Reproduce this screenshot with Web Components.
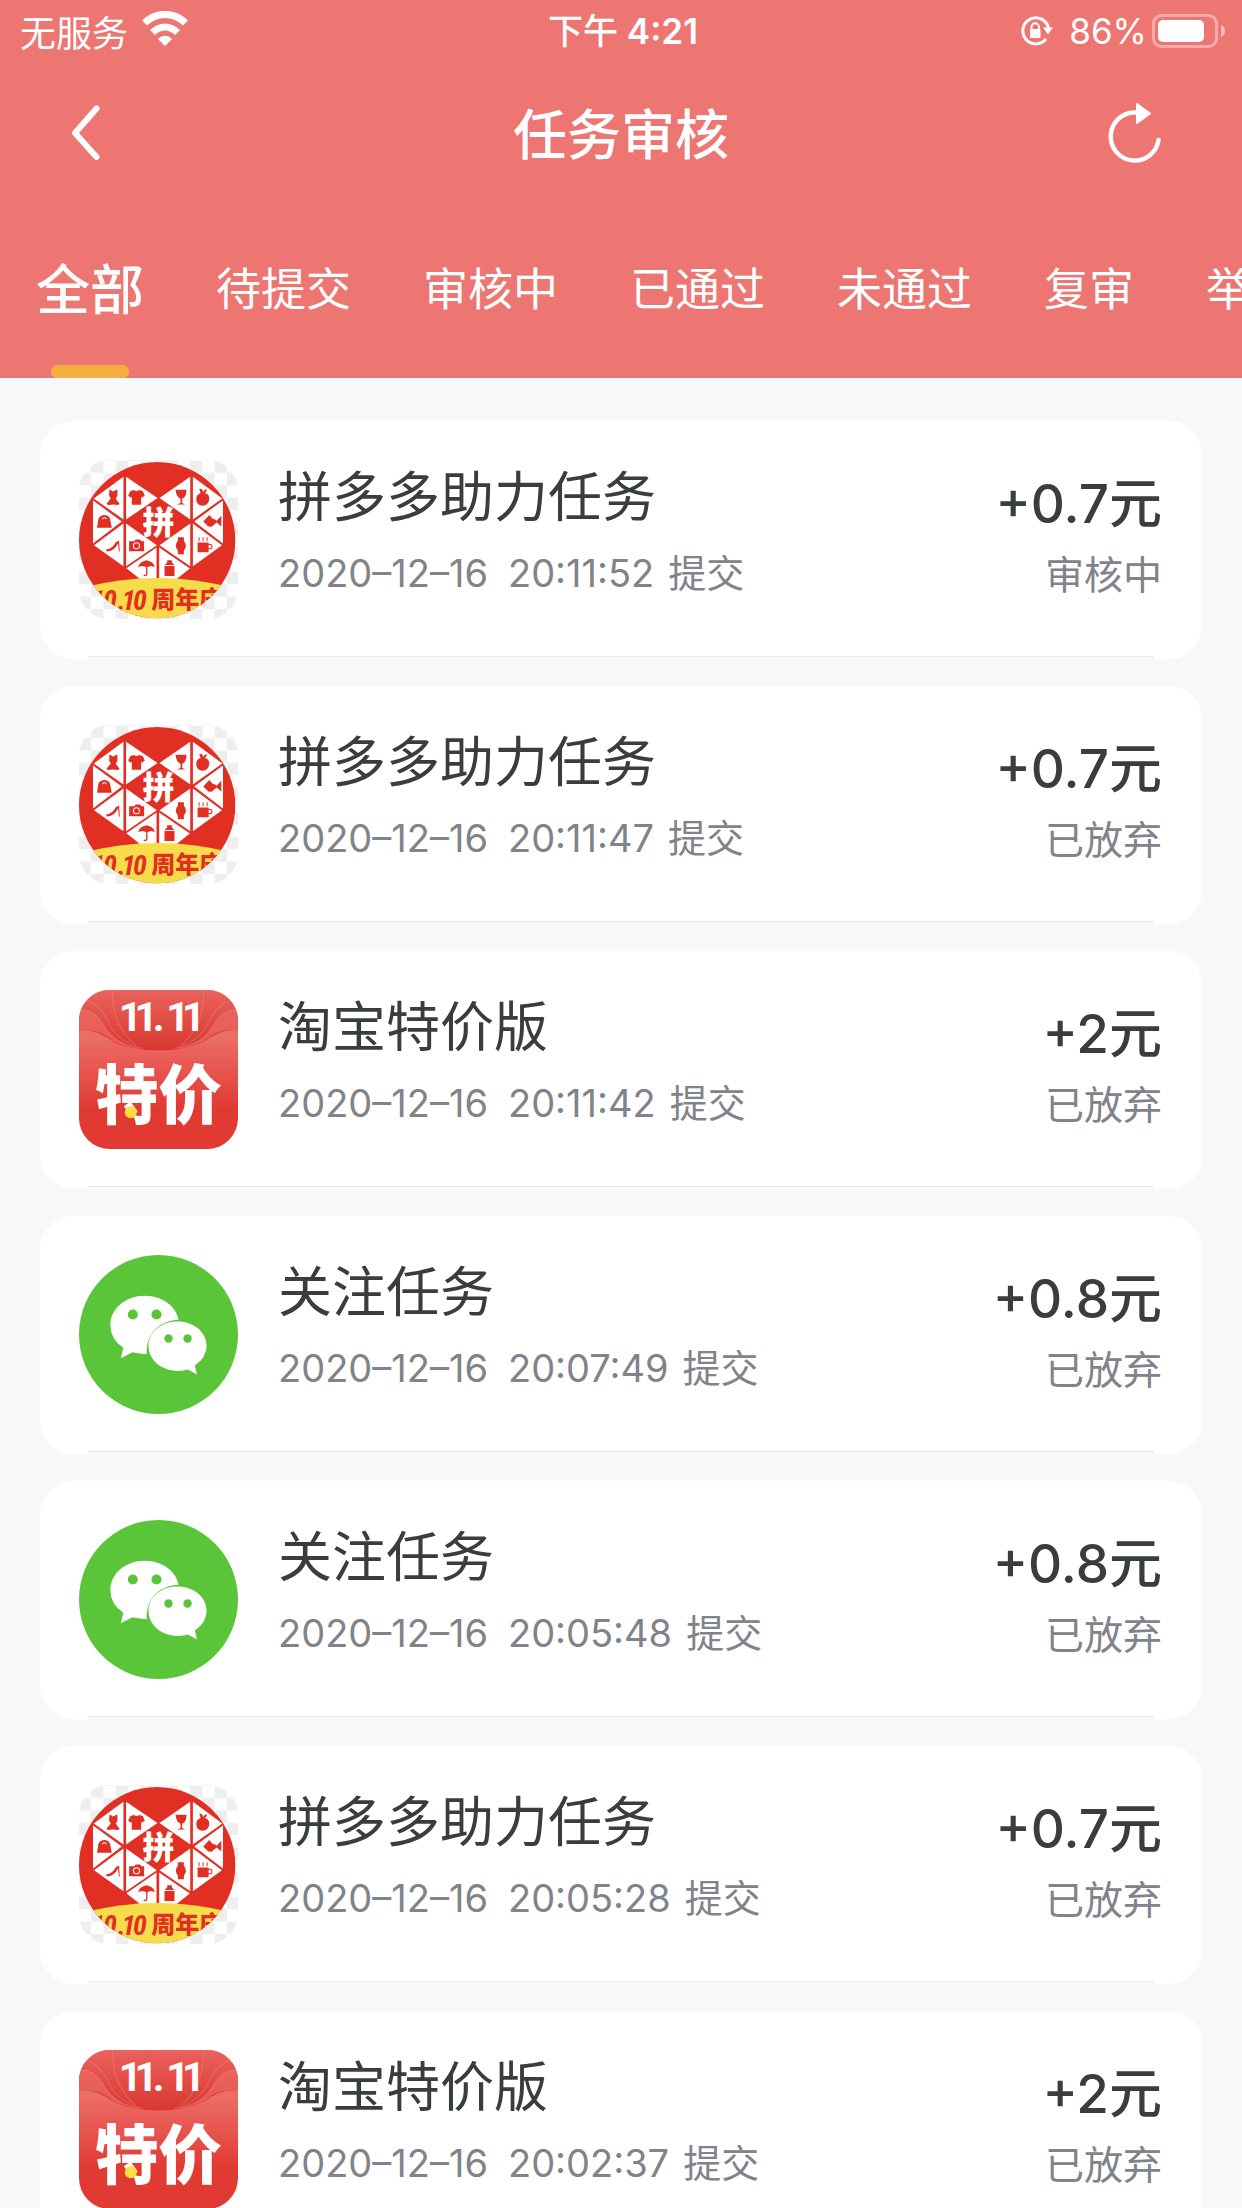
<!DOCTYPE html>
<html lang="zh-CN">
<head>
<meta charset="utf-8">
<meta name="viewport" content="width=device-width, initial-scale=1">
<title>任务审核</title>
<style>
html{height:100%}
body{margin:0;min-height:100%;background:#f7f8fa;font-family:Inter,"Noto Sans CJK SC",sans-serif;color:#393d40;overflow-x:hidden}
</style>
</head>
<body>
<review-page></review-page>

<template id="t-page">
<style>
:host{display:block}
.head{background:#ed7672;color:#fff}
main{padding:43px 40px;display:flex;flex-direction:column;gap:27px}
</style>
<header class="head">
<status-bar></status-bar>
<nav-bar>任务审核</nav-bar>
<tab-strip></tab-strip>
</header>
<main></main>
</template>

<template id="t-status">
<style>
:host{display:grid;grid-template-columns:1fr auto 1fr;align-items:center;height:62px;padding:0 16px 0 20px;font-size:35px;line-height:40px}
.l,.r{display:flex;align-items:center}
.l{gap:14px;font-size:36px;font-family:"Noto Sans CJK SC",sans-serif}
.r{justify-content:flex-end;gap:5px}
.lock{margin-right:10px}
.c{font-weight:600}
.c span{font-weight:500}
svg{display:block}
</style>
<div class="l"><span>无服务</span>
<svg width="46" height="40" viewBox="0 0 46 40" fill="none" stroke="#fff"><path d="M2.500 12C14 .5 32 .5 43.500 12" stroke-width="7"/><path d="M10.500 21.500C18 14 28 14 35.500 21.500" stroke-width="7"/><path d="M23 35l-7-7c3.500-4.500 10.500-4.500 14 0z" fill="#fff" stroke="none"/></svg></div>
<div class="c"><span>下午</span> 4:21</div>
<div class="r">
<svg class="lock" width="34" height="32" viewBox="0 0 34 32" fill="none" stroke="#fff" stroke-width="3"><path d="M28.500 13A13 13 0 1 0 26 24"/><path d="M23 12.500h10l-5 7z" fill="#fff" stroke="none"/><path d="M11.500 15v-3a3.700 3.700 0 0 1 7.400 0v3" stroke-width="2"/><rect x="10" y="14" width="10.500" height="9" rx="1" fill="#fff" stroke="none"/></svg>
<span>86%</span>
<svg width="74" height="34" viewBox="0 0 74 34"><rect x="1.500" y="1.500" width="63" height="31" rx="8" fill="none" stroke="#fff" stroke-opacity=".4" stroke-width="3"/><rect x="6" y="6" width="46" height="22" rx="5" fill="#fff"/><path d="M69 11q4 1.500 4 6t-4 6z" fill="#fff" fill-opacity=".5"/></svg>
</div>
</template>

<template id="t-nav">
<style>
:host{display:grid;grid-template-columns:1fr auto 1fr;align-items:center;height:140px;padding:0 81px 4px 65px}
button{border:0;background:none;padding:0;width:84px;height:84px;display:flex;align-items:center;color:inherit}
.go{justify-content:flex-end;justify-self:end}
h1{margin:0 0 0 16px;font:500 54px/80px "Noto Sans CJK SC",sans-serif}
</style>
<button type="button" aria-label="返回"><svg width="40" height="56" viewBox="0 0 40 56"><path d="M31.500 4.500L10 29l21.500 24" fill="none" stroke="#fff" stroke-width="6" stroke-linecap="round" stroke-linejoin="round"/></svg></button>
<h1><slot></slot></h1>
<button class="go" type="button" aria-label="刷新"><svg width="70" height="62" viewBox="0 -2 70 62"><path d="M47 9.500h-3A24 24 0 1 0 67.500 37" fill="none" stroke="#fff" stroke-width="4.500" stroke-linecap="round"/><path d="M46 1l13 9.500-13 9.500z" fill="#fff" stroke="#fff" stroke-width="2" stroke-linejoin="round"/></svg></button>
</template>

<template id="t-tabs">
<style>
:host{display:block;overflow:hidden}
nav{display:flex;gap:72px;padding-left:36px;height:172px}
button{flex:none;border:0;background:none;padding:0 0 10px;margin:0;color:#fff;font:400 45px/64px "Noto Sans CJK SC",sans-serif;position:relative;white-space:nowrap}
button[aria-current]{font-size:54px;font-weight:500}
button[aria-current]::after{content:"";position:absolute;left:50%;bottom:0;width:78px;height:13px;margin-left:-39px;border-radius:6px;background:#f3ae3e}
</style>
<nav><button type="button" aria-current="page">全部</button><button type="button">待提交</button><button type="button">审核中</button><button type="button">已通过</button><button type="button">未通过</button><button type="button">复审</button><button type="button">举报</button></nav>
</template>

<template id="t-card">
<style>
:host{display:block;position:relative;background:#fff;border-radius:33px}
:host::after{content:"";position:absolute;left:48px;right:48px;bottom:0;height:2px;background:#f7f8fa;border-top:1px solid #e8e9eb}
article{display:flex;align-items:center;padding:39px 40px 40px 39px;gap:40px}
.txt,.sum{height:159px}
.txt{flex:1;min-width:0}
.sum{text-align:right}
h2,p{margin:0}
h2{font:400 54px/74px "Noto Sans CJK SC",sans-serif;margin-top:-3px}
p{font:400 38px/54px Inter,"Noto Sans CJK SC",sans-serif;color:#808389}
.when{display:flex;margin-top:15px}
time{display:flex;gap:20px;margin-right:14px}
.amt{font:500 53px/76px Inter,"Noto Sans CJK SC",sans-serif;padding-top:6px}
.st{font:400 39px/54px "Noto Sans CJK SC",sans-serif;margin-top:3px}
</style>
<article>
<slot name="icon"></slot>
<div class="txt"><h2><slot></slot></h2><p class="when"><time><span class="d"></span><span class="h"></span></time><span>提交</span></p></div>
<div class="sum"><div class="amt"></div><p class="st"></p></div>
</article>
</template>

<template id="i-pdd">
<svg width="159" height="159" viewBox="0 0 476 476">
<defs><pattern id="chk" width="74" height="74" patternUnits="userSpaceOnUse" x="-1" y="2"><rect width="74" height="74" fill="#fff"/><path d="M37 0h37v37H37zM0 37h37v37H0z" fill="#eee"/></pattern>
<clipPath id="ci"><circle cx="234" cy="240" r="234"/></clipPath></defs>
<rect width="476" height="476" rx="90" fill="url(#chk)"/>
<g clip-path="url(#ci)"><rect width="476" height="476" fill="#e22f24"/>
<g fill="#fff"><path d="M133 50v128L44 115zM141 50l94 64-94 64zM333 50v128l-92-64zM341 50l88 65-88 63zM42 121l86 63-86 66zM431 121v129l-86-66zM133 190v128l-88-63zM141 190l92 65-92 63zM333 190v128l-92-63zM341 190l87 65-87 63zM232 262v110h-30l-60-48zM240 262l92 63-60 47h-32z"/></g>
<g fill="#e22f24">
<path d="M91 89l5 1q4 8 14 0l5-1v18l-5 9 12 16-6 3q-14-4-28 0l-6-3 13-17-5-9z"/>
<path d="M159 91l6-1q7 6 15 0l11 3 6 13-9 7-2-3v24h-28v-24l-3 3-8-7 7-13z"/>
<path d="M289 89h33q0 21-13 27v13l9 4h-25l11-4v-13q-13-5-15-27z"/>
<path d="M360 86q10-2 12 10 5-10 11-8-1 9-7 11 15 3 14 18-2 19-20 20-18-2-19-19 0-15 13-19z"/>
<path d="M58 176q6-11 18-11t17 11l5 27H54z"/>
<path d="M372 184l18-19 10 11q9 2 12 6l14-15v32l-14-12-15 13-10-1z"/>
<path d="M81 268q20-3 29-22l10-5 2 33h-3l-2-25q-11 24-34 25z"/>
<path d="M150 243h15l5-5h13l4 5h8v30h-45z"/>
<path d="M296 231h18v11q12 14 0 30v10h-18v-10q-12-16 0-30z"/>
<path d="M355 247h33v29h-33zM358 231h3v12h-3zM370 231h3v12h-3zM382 231h3v12h-3z"/>
<path d="M177 320q5-16 25-20 21 4 25 20l-11-3-11 3v21q-3 12-13 4l4-2q5 2 5-4v-19l-12-3z"/>
<path d="M256 314l8-7v-7h14v7l8 7zM256 317h30v30h-30z"/></g>
<circle cx="172" cy="257" r="9" fill="#e22f24" stroke="#fff" stroke-width="3"/><circle cx="391" cy="259" r="7" fill="none" stroke="#e22f24" stroke-width="3"/><path d="M70 177q6-9 12 0" fill="none" stroke="#fff" stroke-width="3"/>
<path d="M10 382Q235 324 460 382V476H10z" fill="#f6dc4b"/>
<g fill="#e22f24" font-family="Noto Sans CJK SC"><text x="238" y="222" font-size="96" font-weight="900" fill="#fff" text-anchor="middle">拼</text><text x="36 72 116 128 162" y="448" font-size="84" font-weight="700" font-style="italic" font-family="Roboto Condensed, Liberation Sans Narrow, Roboto">10.10</text><text x="216" y="443" font-size="72" font-weight="900">周年庆</text></g></g>
</svg>
</template>

<template id="i-tao">
<svg width="159" height="159" viewBox="0 0 476 476">
<defs><linearGradient id="g1" x2="0" y2="1"><stop offset="0" stop-color="#ea625c"/><stop offset="1" stop-color="#d93731"/></linearGradient><linearGradient id="g2" x2="0" y2="1"><stop offset=".3" stop-color="#ec6c66"/><stop offset=".75" stop-color="#e03a32"/></linearGradient><clipPath id="rt"><rect width="476" height="476" rx="92"/></clipPath></defs>
<g clip-path="url(#rt)"><rect width="476" height="476" fill="url(#g2)"/><path d="M0 0H476V122Q430 112 370 157 300 182 238 181 160 180 106 157 45 112 0 122z" fill="url(#g1)"/>
<path d="M0 60Q45 55 75 108T180 175Q120 165 100 152 60 112 0 122zM476 60Q430 55 401 108T296 175Q356 165 376 152 416 112 476 122z" fill="#ec6f68" opacity=".6"/>
<g fill="none" stroke="#f08a83" stroke-width="3" opacity=".45"><path d="M0 60Q45 55 75 108T180 175M25 32Q65 45 90 100T190 175M100 0Q100 110 170 165M476 60Q430 55 401 108T296 175M451 32Q411 45 386 100T286 175M374 0Q374 110 306 165"/></g>
<text x="119 166 221 261 308" y="122" font-family="Roboto" font-size="122" font-weight="700" fill="#fff">11.11</text>
<text x="48" y="384" font-family="Noto Sans CJK SC" font-size="190" font-weight="900" fill="#fff">特价</text>
<circle cx="155" cy="366" r="18" fill="#ffdf40"/></g>
</svg>
</template>

<template id="i-wx">
<svg width="159" height="159" viewBox="0 0 476 476"><circle cx="238" cy="238" r="238" fill="#5ac539"/>
<path d="M203 297Q182 296 160 291L125 309 133 278Q94 252 94 210C94 160 140 122 196 122S291 155 298 194C240 197 200 235 203 297z" fill="#fff"/>
<path d="M295 199c49 0 87 32 87 73q0 35-35 59l6 27-27-15q-12 4-31 4c-49 0-87-33-87-75s38-73 87-73z" fill="#fff"/>
<g fill="#5ac539"><circle cx="161" cy="178" r="15"/><circle cx="232" cy="178" r="15"/><circle cx="268" cy="250" r="12.500"/><circle cx="325" cy="250" r="12.500"/></g></svg>
</template>

<script>
const stamp = (host, id) => host.attachShadow({mode:'open'}).append(document.getElementById(id).content.cloneNode(true));
class StatusBar extends HTMLElement{constructor(){super();stamp(this,'t-status')}}
class NavBar extends HTMLElement{constructor(){super();stamp(this,'t-nav')}}
class TabStrip extends HTMLElement{constructor(){super();stamp(this,'t-tabs')}}
class AppIcon extends HTMLElement{
  connectedCallback(){
    if(this.shadowRoot)return;
    stamp(this,'i-'+this.getAttribute('name'));
    const s=document.createElement('style');
    s.textContent=':host{display:block;flex:none}svg{display:block}';
    this.shadowRoot.prepend(s);
  }
}
class TaskCard extends HTMLElement{
  connectedCallback(){
    if(this.shadowRoot)return;
    stamp(this,'t-card');
    const $=q=>this.shadowRoot.querySelector(q);
    const [d,h]=this.getAttribute('time').split(' ');
    $('.d').textContent=d;
    $('.h').textContent=h;
    $('.amt').textContent=this.getAttribute('amount');
    $('.st').textContent=this.getAttribute('status');
  }
}
const tasks=[
 ['pdd','拼多多助力任务','2020–12–16 20:11:52','+0.7元','审核中'],
 ['pdd','拼多多助力任务','2020–12–16 20:11:47','+0.7元','已放弃'],
 ['tao','淘宝特价版','2020–12–16 20:11:42','+2元','已放弃'],
 ['wx','关注任务','2020–12–16 20:07:49','+0.8元','已放弃'],
 ['wx','关注任务','2020–12–16 20:05:48','+0.8元','已放弃'],
 ['pdd','拼多多助力任务','2020–12–16 20:05:28','+0.7元','已放弃'],
 ['tao','淘宝特价版','2020–12–16 20:02:37','+2元','已放弃']
];
class ReviewPage extends HTMLElement{
  constructor(){
    super();stamp(this,'t-page');
    this.shadowRoot.querySelector('main').innerHTML=tasks.map(([i,n,t,a,s])=>`<task-card time="${t}" amount="${a}" status="${s}"><app-icon slot="icon" name="${i}"></app-icon>${n}</task-card>`).join('');
  }
}
customElements.define('status-bar',StatusBar);
customElements.define('nav-bar',NavBar);
customElements.define('tab-strip',TabStrip);
customElements.define('app-icon',AppIcon);
customElements.define('task-card',TaskCard);
customElements.define('review-page',ReviewPage);
</script>
</body>
</html>
